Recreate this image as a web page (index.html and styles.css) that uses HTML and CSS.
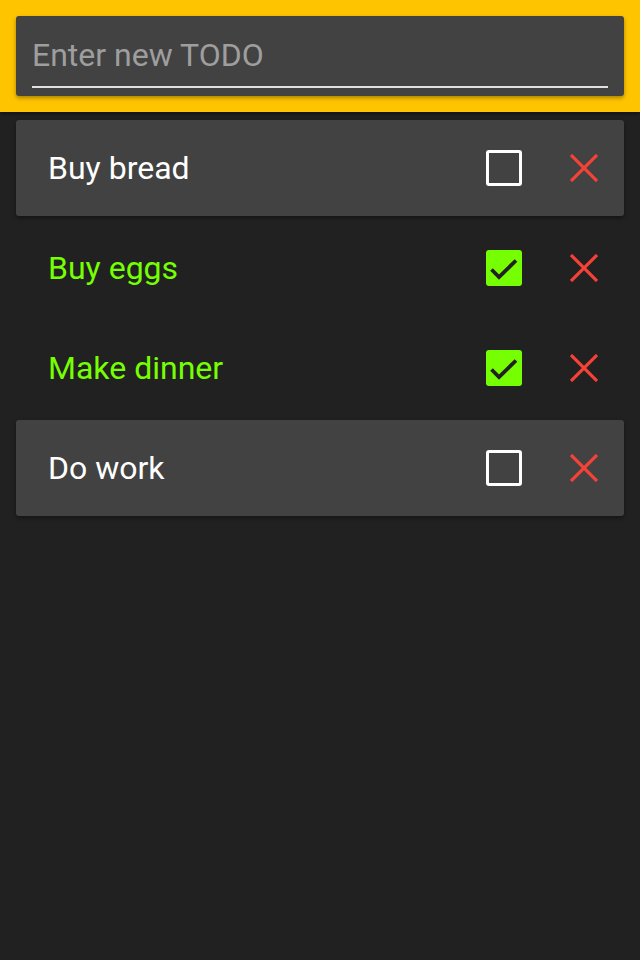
FILE: index.html
```html
<!DOCTYPE html>
<html>
<head>
<meta charset="utf-8">
<link rel="stylesheet" href="styles.css">
</head>
<body>
<header class="header">
  <div class="input-card">
    <div class="input-field">Enter new TODO</div>
  </div>
</header>
<main class="list">
  <div class="item card">
    <span class="label">Buy bread</span>
    <span class="box"></span>
    <svg class="del" viewBox="0 0 28 28" width="28" height="28"><path d="M1 1L27 27M27 1L1 27" stroke="#f44336" stroke-width="3.2" fill="none"/></svg>
  </div>
  <div class="item done">
    <span class="label">Buy eggs</span>
    <span class="box checked"><svg viewBox="0 0 36 36" width="36" height="36"><path d="M5.5 19.5L13 27L30 10.5" stroke="#212121" stroke-width="3.8" fill="none"/></svg></span>
    <svg class="del" viewBox="0 0 28 28" width="28" height="28"><path d="M1 1L27 27M27 1L1 27" stroke="#f44336" stroke-width="3.2" fill="none"/></svg>
  </div>
  <div class="item done">
    <span class="label">Make dinner</span>
    <span class="box checked"><svg viewBox="0 0 36 36" width="36" height="36"><path d="M5.5 19.5L13 27L30 10.5" stroke="#212121" stroke-width="3.8" fill="none"/></svg></span>
    <svg class="del" viewBox="0 0 28 28" width="28" height="28"><path d="M1 1L27 27M27 1L1 27" stroke="#f44336" stroke-width="3.2" fill="none"/></svg>
  </div>
  <div class="item card">
    <span class="label">Do work</span>
    <span class="box"></span>
    <svg class="del" viewBox="0 0 28 28" width="28" height="28"><path d="M1 1L27 27M27 1L1 27" stroke="#f44336" stroke-width="3.2" fill="none"/></svg>
  </div>
</main>
</body>
</html>
```
FILE: styles.css
```css
html, body {
  margin: 0;
  padding: 0;
  background: #212121;
  font-family: Roboto, "Noto Sans", sans-serif;
  height: 100%;
}
.header {
  background: #ffc400;
  padding: 16px;
  height: 80px;
  box-shadow: 0 2px 4px rgba(0,0,0,0.5);
  position: relative;
  z-index: 1;
}
.input-card {
  background: #424242;
  border-radius: 3px;
  height: 80px;
  box-shadow: 0 2px 4px rgba(0,0,0,0.35);
  padding: 0 16px;
  box-sizing: border-box;
  display: flex;
  flex-direction: column;
  justify-content: flex-end;
}
.input-field {
  color: #9e9e9e;
  font-size: 32px;
  line-height: 36px;
  padding-bottom: 13px;
  border-bottom: 2px solid #e0e0e0;
  margin-bottom: 8px;
}
.list {
  padding: 8px 16px;
  display: flex;
  flex-direction: column;
  gap: 4px;
}
.item {
  height: 96px;
  display: flex;
  align-items: center;
  padding: 0 26px 0 32px;
  border-radius: 3px;
}
.card {
  background: #424242;
  box-shadow: 0 2px 4px rgba(0,0,0,0.4);
}
.label {
  flex: 1;
  color: #fff;
  font-size: 32px;
}
.done .label {
  color: #76ff03;
}
.box {
  width: 36px;
  height: 36px;
  box-sizing: border-box;
  border: 3.5px solid #fff;
  border-radius: 3px;
  margin-right: 48px;
  display: block;
}
.box.checked {
  border: none;
  background: #76ff03;
}
.box svg {
  display: block;
}
.del {
  display: block;
}
```
